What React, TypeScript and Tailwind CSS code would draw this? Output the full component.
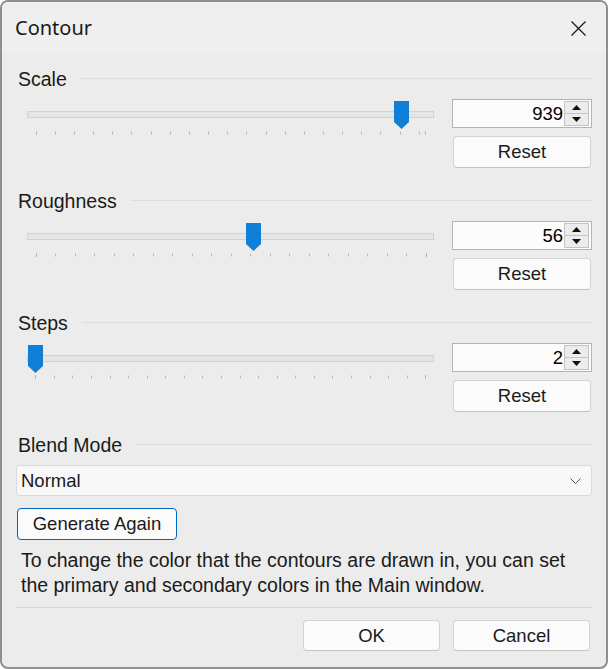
import React from 'react'

const SLIDER_LEFT = 27

interface SliderDef {
  label: string
  value: number
  thumbX: number
  tickStart: number
  tickStep: number
  tickCount: number
  tickEnd: number
}

const sliders: SliderDef[] = [
  { label: 'Scale', value: 939, thumbX: 401.5, tickStart: 35.7, tickStep: 19.155, tickCount: 21, tickEnd: 425.4 },
  { label: 'Roughness', value: 56, thumbX: 253.5, tickStart: 35.7, tickStep: 19.5, tickCount: 21, tickEnd: 425.7 },
  { label: 'Steps', value: 2, thumbX: 35.5, tickStart: 35.3, tickStep: 18.57, tickCount: 22, tickEnd: 425.3 },
]

function SectionHeader({ label }: { label: string }) {
  return (
    <div className="flex h-[26px] items-center gap-[14px] pl-[2px]">
      <span className="text-[19.5px] leading-none text-[#1a1a1a]">{label}</span>
      <div className="mb-[3px] h-px flex-1 bg-[#dcdcdc]" />
    </div>
  )
}

function Ticks({ s }: { s: SliderDef }) {
  const xs: number[] = []
  for (let i = 0; i < s.tickCount; i++) xs.push(s.tickStart + i * s.tickStep)
  xs.push(s.tickEnd)
  return (
    <svg width="407" height="6" className="absolute left-0 top-[32px]">
      {xs.map((x, i) => (
        <rect
          key={i}
          x={Math.round(x - SLIDER_LEFT)}
          y={i === 0 || i === xs.length - 1 ? 0 : 0.5}
          width="1"
          height={i === 0 || i === xs.length - 1 ? 4 : 3}
          fill="#b8b8b8"
        />
      ))}
    </svg>
  )
}

function Slider({ s }: { s: SliderDef }) {
  return (
    <div className="relative ml-[11px] h-[40px] w-[407px]">
      <div className="absolute left-0 right-0 top-[12px] h-[7px] border border-[#d2d2d2] bg-[#e3e6e6]" />
      <Ticks s={s} />
      <svg
        width="15"
        height="28"
        className="absolute top-[2px]"
        style={{ left: Math.round(s.thumbX - 7.5 - SLIDER_LEFT) }}
      >
        <polygon points="0,0 15,0 15,21 7.5,28 0,21" fill="#0f7fd8" />
      </svg>
    </div>
  )
}

function Spinner({ value }: { value: number }) {
  return (
    <div className="flex h-[29px] w-[140px] border border-[#b4b4b4] bg-[#fcfcfc]">
      <div className="flex flex-1 items-center justify-end pr-[1px] text-[18.5px] text-black">{value}</div>
      <div className="my-px mr-[2px] flex w-[25px] flex-col border border-[#c4c4c4]">
        <div className="flex flex-1 items-center justify-center border-b border-[#c4c4c4] bg-[#ececec]">
          <svg width="9" height="5"><polygon points="0,5 4.5,0 9,5" fill="#111" /></svg>
        </div>
        <div className="flex flex-1 items-center justify-center bg-[#ececec]">
          <svg width="9" height="5"><polygon points="0,0 9,0 4.5,5" fill="#111" /></svg>
        </div>
      </div>
    </div>
  )
}

function Button({ label, className = '' }: { label: string; className?: string }) {
  return (
    <button
      className={`flex items-center justify-center rounded-[4px] border border-[#d3d3d3] border-b-[#c2c2c2] bg-[#fbfbfb] text-[18.5px] text-[#1a1a1a] ${className}`}
    >
      {label}
    </button>
  )
}

export default function App() {
  return (
    <div className="h-[669px] w-[608px] bg-white" style={{ fontFamily: '"Liberation Sans", Arial, sans-serif' }}>
      <div className="flex h-full w-full flex-col overflow-hidden rounded-[8px] border-2 border-[#8f8f8f] bg-[#ececec]">
        {/* Title bar */}
        <div className="flex h-[51px] items-center justify-between bg-[#efefef] pl-[13px] pr-[20px] pt-px">
          <span
            className="text-[20px] text-[#1a1a1a]"
            style={{ fontFamily: '"Noto Sans", "Open Sans", sans-serif' }}
          >
            Contour
          </span>
          <svg width="15" height="15" viewBox="0 0 15 15">
            <path d="M0.5 0.5 L14.5 14.5 M14.5 0.5 L0.5 14.5" stroke="#1a1a1a" strokeWidth="1.3" />
          </svg>
        </div>

        <div className="flex flex-col px-[14px] pt-[14px]">
          {sliders.map((s) => (
            <div key={s.label} className="mb-[21px] flex flex-col">
              <SectionHeader label={s.label} />
              <div className="mt-[6px] flex justify-between">
                <Slider s={s} />
                <div className="flex flex-col items-start gap-[8px]">
                  <Spinner value={s.value} />
                  <Button label="Reset" className="ml-px h-[32px] w-[138px]" />
                </div>
              </div>
            </div>
          ))}

          <SectionHeader label="Blend Mode" />
          <div className="mt-[6px] flex h-[31px] items-center justify-between rounded-[3px] border border-[#dadada] bg-[#f8f8f8] pl-[4px] pr-[10px] text-[18.5px] text-[#1a1a1a]">
            <span>Normal</span>
            <svg width="11" height="6" viewBox="0 0 11 6">
              <path d="M0.5 0.5 L5.5 5.5 L10.5 0.5" fill="none" stroke="#555" strokeWidth="1" />
            </svg>
          </div>

          <button className="ml-px mt-[12px] flex h-[32px] w-[160px] items-center justify-center rounded-[4px] border border-[#0067c0] bg-[#fbfbfb] text-[18.5px] text-[#1a1a1a]">
            Generate Again
          </button>

          <p className="mt-[8px] pl-[5px] text-[19.5px] leading-[25px] text-[#1a1a1a]">
            To change the color that the contours are drawn in, you can set
            <br />
            the primary and secondary colors in the Main window.
          </p>

          <div className="mt-[9px] h-px bg-[#d8d8d8]" />

          <div className="mr-[2px] mt-[12px] flex justify-end gap-[13px]">
            <Button label="OK" className="h-[31px] w-[137px]" />
            <Button label="Cancel" className="h-[31px] w-[137px]" />
          </div>
        </div>
      </div>
    </div>
  )
}
